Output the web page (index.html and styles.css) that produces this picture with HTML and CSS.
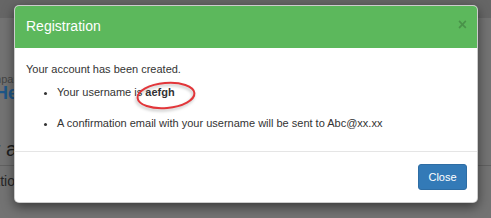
FILE: index.html
```
<!DOCTYPE html>
<html>
<head>
<meta charset="utf-8">
<link rel="stylesheet" href="styles.css">
</head>
<body>
<div class="page">
  <div class="navbar"></div>
  <div class="page-inner">
    <div class="crumb">Company</div>
    <div class="brand">Helpdesk</div>
    <div class="section-title">Your account</div>
    <div class="rule"></div>
    <div class="tab-text">Registration</div>
  </div>
</div>

<div class="modal">
  <div class="modal-header">
    <h4 class="modal-title">Registration</h4>
    <span class="close">&times;</span>
  </div>
  <div class="modal-body">
    <p class="lead-line">Your account has been created.</p>
    <ul class="info-list">
      <li>Your username is <b>aefgh</b></li>
      <li>A confirmation email with your username will be sent to Abc@xx.xx</li>
    </ul>
  </div>
  <div class="modal-footer">
    <button class="btn-close">Close</button>
  </div>
  <svg class="mark" width="90" height="40" viewBox="0 0 90 40">
    <ellipse cx="46" cy="19.5" rx="28.5" ry="12.5" transform="rotate(-5 46 19.5)" fill="none" stroke="#e2363a" stroke-width="2"/>
  </svg>
</div>
</body>
</html>
```
FILE: styles.css
```
html, body {
  margin: 0;
  padding: 0;
}
body {
  width: 491px;
  height: 218px;
  overflow: hidden;
  background: #737373;
  font-family: "Liberation Sans", Arial, sans-serif;
  position: relative;
}
.page {
  width: 491px;
}
.navbar {
  height: 18px;
  background: #666666;
}
.page-inner {
  display: flex;
  flex-direction: column;
  white-space: nowrap;
}
.crumb {
  margin-top: 56px;
  margin-left: -22px;
  font-size: 11px;
  line-height: 11px;
  color: #454545;
}
.brand {
  margin-left: -5px;
  font-size: 18px;
  line-height: 16px;
  font-weight: bold;
  color: #1f5788;
}
.section-title {
  margin-top: 36px;
  margin-left: -40px;
  font-size: 20px;
  line-height: 24px;
  color: #1e1e1e;
}
.rule {
  margin-top: 4px;
  height: 1px;
  background: #616161;
}
.tab-text {
  margin-top: 7px;
  margin-left: -52px;
  font-size: 14px;
  line-height: 16px;
  color: #262626;
}

.modal {
  position: absolute;
  left: 14px;
  top: 5px;
  width: 464px;
  box-sizing: border-box;
  background: #ffffff;
  border: 1px solid rgba(0, 0, 0, 0.2);
  border-radius: 5px;
  box-shadow: 0 4px 12px rgba(0, 0, 0, 0.5);
  overflow: hidden;
  color: #333333;
}
.modal-header {
  display: flex;
  justify-content: space-between;
  align-items: flex-start;
  background: #5cb85c;
  padding: 10px 10px 12px 11px;
}
.modal-title {
  margin: 0;
  font-size: 14px;
  line-height: 20px;
  font-weight: normal;
  color: #ffffff;
}
.close {
  margin-top: -1px;
  font-size: 16px;
  line-height: 20px;
  font-weight: bold;
  color: #000000;
  opacity: 0.2;
}
.modal-body {
  padding: 13.7px 11px 11.7px;
  font-size: 11px;
  line-height: 15.6px;
}
.lead-line {
  margin: 0 0 7.7px;
}
.info-list {
  margin: 0 0 7.8px;
  padding-left: 31px;
}
.info-list li + li {
  margin-top: 15.6px;
}
.modal-footer {
  display: flex;
  justify-content: flex-end;
  border-top: 1px solid #e5e5e5;
  padding: 11.5px 10px 11.5px;
}
.btn-close {
  height: 26.5px;
  padding: 0 9.4px;
  font-family: "Liberation Sans", Arial, sans-serif;
  font-size: 11px;
  color: #ffffff;
  background: #337ab7;
  border: 1px solid #2e6da4;
  border-radius: 3px;
}
.mark {
  position: absolute;
  left: 105px;
  top: 70px;
  filter: drop-shadow(-1px 2px 1.5px rgba(0, 0, 0, 0.25));
}
```
